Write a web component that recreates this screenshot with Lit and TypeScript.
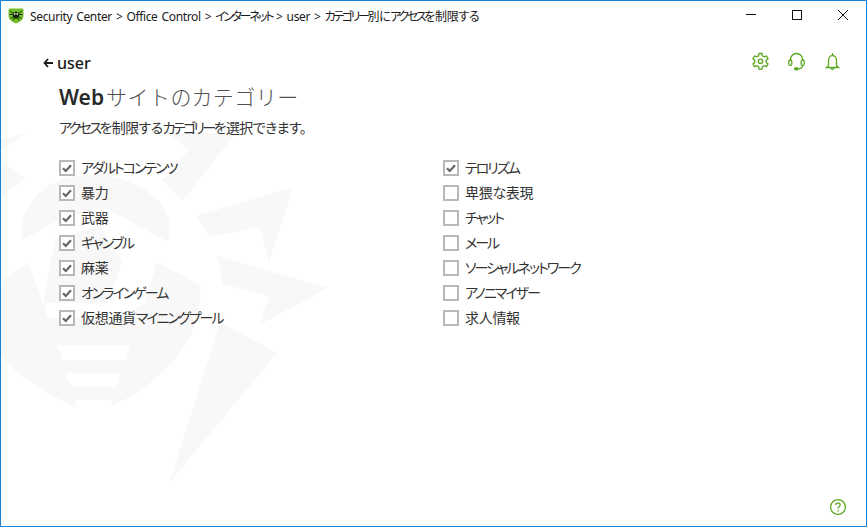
import { LitElement, html, css, svg } from "lit";
import { customElement } from "lit/decorators.js";

const LEFT = ["アダルトコンテンツ", "暴力", "武器", "ギャンブル", "麻薬", "オンラインゲーム", "仮想通貨マイニングプール"];
const RIGHT: [string, boolean][] = [
  ["テロリズム", true],
  ["卑猥な表現", false],
  ["チャット", false],
  ["メール", false],
  ["ソーシャルネットワーク", false],
  ["アノニマイザー", false],
  ["求人情報", false],
];

// spider logo behind the content, coordinates are window pixels
const WATERMARK = svg`
  <path d="M22 240C18 205 45 178 83 175C125 172 172 195 170 232L167 241L103 207L55 222Z"/>
  <path d="M55 240L100 225L122 262L107 303L43 303Z"/>
  <path d="M157 262L200 285C205 340 160 385 110 407L76 407C40 392 10 370 0 353L0 283L28 262L43 303L48 318L118 318L145 303Z"/>
  <path d="M0 140L27 133L0 150Z"/>
  <path d="M0 160L25 178L0 198Z"/>
  <path d="M167 133L236 133L183 200L162 180L189 150Z"/>
  <path d="M196 216L293 187L269 262L260 227L210 237Z"/>
  <path d="M217 256L328 288L259 325L269 296L223 284Z"/>
  <path d="M220 322L277 353L170 482Z"/>
`;

const WATERMARK_CUTS = svg`
  <path d="M57 345L130 345L125 360L62 360Z"/>
  <path d="M65 373L122 373L117 387L72 387Z"/>
  <path d="M75 400L112 400L110 408L77 408Z"/>
`;

// the reference font sets katakana much narrower than kanji, so those runs get their own tracking
const jp = (text: string) =>
  text.split(/([\u30A0-\u30FF]+)/).map((part, i) => (i % 2 ? html`<span class="kana">${part}</span>` : part));

@customElement("app-root")
export class AppRoot extends LitElement {
  static styles = css`
    :host {
      display: block;
      font-family: "Noto Sans", "Noto Sans CJK JP", sans-serif;
      color: #1a1a1a;
    }

    .window {
      position: relative;
      box-sizing: border-box;
      width: 867px;
      height: 527px;
      display: flex;
      flex-direction: column;
      background: #fff;
      border: 1px solid #1883d7;
      overflow: hidden;
    }

    .watermark {
      position: absolute;
      left: -1px;
      top: -1px;
    }

    .titlebar {
      position: relative;
      display: flex;
      align-items: center;
      height: 28px;
      padding-left: 7px;
      font-size: 12px;
      white-space: nowrap;
    }

    .logo {
      margin: 1px 6px 0 0;
    }

    .title {
      flex: 1;
      padding-top: 1px;
      font-feature-settings: "palt";
      letter-spacing: -0.35px;
      word-spacing: 1.2px;
    }

    .title .kana {
      letter-spacing: -2.4px;
    }

    .winbtn {
      width: 46px;
      height: 28px;
      display: flex;
      align-items: center;
      justify-content: center;
    }

    .main {
      position: relative;
      flex: 1;
      display: flex;
      flex-direction: column;
      padding: 19px 0 0 42px;
    }

    .top {
      display: flex;
      align-items: center;
      justify-content: space-between;
      height: 26px;
      padding-right: 24px;
    }

    .back {
      display: flex;
      align-items: center;
      gap: 4px;
      margin-top: 4px;
      font-size: 16px;
      font-weight: 500;
    }

    .tools {
      display: flex;
      gap: 17px;
    }

    .content {
      position: relative;
      padding-left: 16px;
    }

    h1 {
      margin: 8px 0 0;
      font-size: 21px;
      line-height: 30px;
      font-weight: 300;
      color: #505050;
    }

    h1 b {
      margin-right: 2px;
      font-weight: 600;
      color: #2a2a2a;
    }

    h1 .kana {
      letter-spacing: 0.45px;
    }

    .lead {
      margin: 7px 0 0;
      font-size: 14px;
      line-height: 18px;
      color: #333;
      font-feature-settings: "palt";
      letter-spacing: -0.6px;
    }

    .lead .kana {
      letter-spacing: -2.6px;
    }

    .columns {
      display: grid;
      grid-template-columns: 384px 1fr;
      margin-top: 18px;
    }

    .row {
      display: flex;
      align-items: center;
      gap: 6px;
      height: 25px;
      font-size: 14px;
      color: #333;
      white-space: nowrap;
      font-feature-settings: "palt";
      letter-spacing: -0.3px;
    }

    .row .kana {
      letter-spacing: -2px;
    }

    .label {
      padding-bottom: 2px;
    }

    .box {
      box-sizing: border-box;
      width: 16px;
      height: 16px;
      border: 2px solid #b8b8b8;
      background: #fff;
      display: flex;
      align-items: center;
      justify-content: center;
    }

    .help {
      position: absolute;
      right: 19px;
      bottom: 10px;
      display: flex;
    }
  `;

  private row(label: string, checked: boolean) {
    return html`<div class="row">
      <span class="box">
        ${checked
          ? html`<svg width="12" height="12" viewBox="0 0 12 12"><path d="M2 6.2L4.8 9L10 3.2" fill="none" stroke="#666" stroke-width="2.2"/></svg>`
          : ""}
      </span>
      <span class="label">${jp(label)}</span>
    </div>`;
  }

  render() {
    return html`<div class="window">
      <svg class="watermark" width="867" height="527" viewBox="0 0 867 527">
        <g fill="#f8f8f8">${WATERMARK}</g>
        <g fill="#fff">${WATERMARK_CUTS}</g>
      </svg>

      <div class="titlebar">
        <svg class="logo" width="16" height="16" viewBox="0 0 16 16">
          <path d="M0.5 2C0.5 1 1 .5 2 .5H14C15 .5 15.5 1 15.5 2V8C15.5 11.5 11 14.5 8 15.5C5 14.5 .5 11.5 .5 8Z" fill="#74c02a"/>
          <path d="M2 3L5.5 5.5M14 3L10.5 5.5M1.5 6.5H5M14.5 6.5H11M2.5 10.5L5.5 8.5M13.5 10.5L10.5 8.5M5 12.5L6.5 10M11 12.5L9.5 10" stroke="#12280a" stroke-width="0.9" fill="none"/>
          <ellipse cx="8" cy="7.2" rx="3.1" ry="3.4" fill="#12280a"/>
          <circle cx="6.8" cy="5.9" r=".9" fill="#e4f4d0"/>
          <circle cx="9.2" cy="5.9" r=".9" fill="#e4f4d0"/>
        </svg>
        <span class="title">Security Center &gt; Office Control &gt; ${jp("インターネット")} &gt; user &gt; ${jp("カテゴリー別にアクセスを制限する")}</span>
        <span class="winbtn">
          <svg width="12" height="12" viewBox="0 0 12 12"><path d="M1 5.5H11" stroke="#111" fill="none"/></svg>
        </span>
        <span class="winbtn">
          <svg width="12" height="12" viewBox="0 0 12 12"><rect x="1.5" y="1.5" width="9" height="9" stroke="#111" fill="none"/></svg>
        </span>
        <span class="winbtn">
          <svg width="12" height="12" viewBox="0 0 12 12"><path d="M1 1L11 11M11 1L1 11" stroke="#111" fill="none"/></svg>
        </span>
      </div>

      <div class="main">
        <div class="top">
          <div class="back">
            <svg width="10" height="10" viewBox="0 0 10 10"><path d="M5 1L1.5 5L5 9M1.5 5H10" stroke="#1a1a1a" stroke-width="1.8" fill="none"/></svg>
            <span>user</span>
          </div>
          <div class="tools">
            <svg width="19" height="19" viewBox="0 0 19 19" fill="none" stroke="#5aa81e" stroke-width="1.3">
              <path d="M8 1.5H11L11.4 3.9L13.3 4.9L15.5 4L17 6.6L15.2 8.2V10.4L17 12L15.5 14.6L13.3 13.7L11.4 14.7L11 17.2H8L7.6 14.7L5.7 13.7L3.5 14.6L2 12L3.8 10.4V8.2L2 6.6L3.5 4L5.7 4.9L7.6 3.9Z"/>
              <circle cx="9.5" cy="9.3" r="2.2"/>
            </svg>
            <svg width="19" height="19" viewBox="0 0 19 19" fill="none" stroke="#5aa81e" stroke-width="1.3">
              <path d="M3.5 9V7.5A6 6 0 0 1 15.5 7.5V9"/>
              <rect x="1.8" y="8" width="3" height="5.5" rx="1.5"/>
              <rect x="14.2" y="8" width="3" height="5.5" rx="1.5"/>
              <path d="M15.7 13.5C15.5 16 13 16.8 10.5 16.8"/>
              <rect x="7.5" y="15.8" width="3.5" height="2" rx="1" fill="#5aa81e"/>
            </svg>
            <svg width="19" height="19" viewBox="0 0 19 19" fill="none" stroke="#5aa81e" stroke-width="1.3">
              <path d="M9.5 1V3M5.5 13.5V8.5A4 5 0 0 1 13.5 8.5V13.5L15.5 15.5H3.5L5.5 13.5Z"/>
              <path d="M8 15.5C8 18 11 18 11 15.5"/>
            </svg>
          </div>
        </div>

        <div class="content">
          <h1><b>Web</b>${jp("サイト")}の${jp("カテゴリー")}</h1>
          <p class="lead">${jp("アクセスを制限するカテゴリーを選択できます。")}</p>
          <div class="columns">
            <div>${LEFT.map((l) => this.row(l, true))}</div>
            <div>${RIGHT.map(([l, c]) => this.row(l, c))}</div>
          </div>
        </div>

        <svg class="help" width="18" height="18" viewBox="0 0 18 18" fill="none" stroke="#5aa81e" stroke-width="1.2">
          <circle cx="9" cy="9" r="7.4"/>
          <path d="M6.8 7C6.8 4.6 11.2 4.6 11.2 7C11.2 8.6 9 8.6 9 10.6"/>
          <path d="M9 12V13.4"/>
        </svg>
      </div>
    </div>`;
  }
}
